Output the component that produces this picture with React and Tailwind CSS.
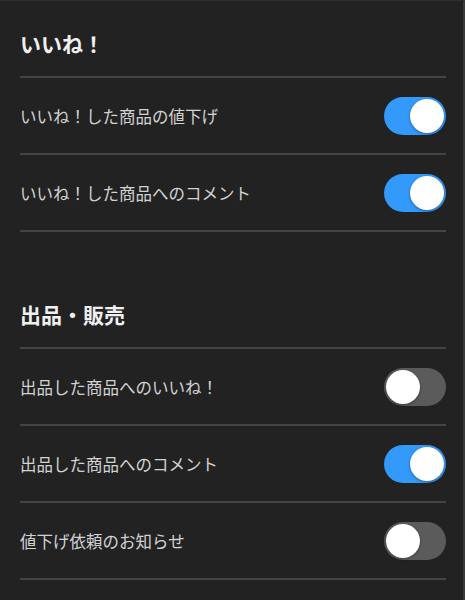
import { useState } from "react";

const sections = [
  {
    title: "いいね！",
    items: [
      { label: "いいね！した商品の値下げ", on: true },
      { label: "いいね！した商品へのコメント", on: true },
    ],
  },
  {
    title: "出品・販売",
    items: [
      { label: "出品した商品へのいいね！", on: false },
      { label: "出品した商品へのコメント", on: true },
      { label: "値下げ依頼のお知らせ", on: false },
    ],
  },
];

function Toggle({ on, onClick }) {
  return (
    <button
      onClick={onClick}
      className={
        on
          ? "flex h-[38px] w-[62px] items-center justify-end rounded-full bg-[#3399fb] px-[2px]"
          : "flex h-[38px] w-[62px] items-center justify-start rounded-full bg-[#5b5b5b] px-[2px]"
      }
    >
      <span className="h-[34px] w-[34px] rounded-full bg-white shadow-[0_1px_3px_rgba(0,0,0,0.35)]"></span>
    </button>
  );
}

export default function App() {
  const [state, setState] = useState(
    sections.map((s) => s.items.map((i) => i.on))
  );

  const flip = (si, ii) => {
    setState((prev) =>
      prev.map((row, a) => row.map((v, b) => (a === si && b === ii ? !v : v)))
    );
  };

  return (
    <div
      className="min-h-[600px] w-full border-t border-r-2 border-t-[#2e2e2e] border-r-[#3a3a3a] bg-[#222222] pl-[20px] pr-[17px]"
      style={{ fontFamily: '"Noto Sans CJK JP", "Noto Sans", sans-serif' }}
    >
      {sections.map((section, si) => (
        <section key={section.title} className={si > 0 ? "mt-[40px]" : ""}>
          {/* Section header */}
          <div className="flex h-[75px] items-start pt-[27px]">
            <h2 className="text-[21px] font-bold leading-[30px] text-[#f0f0f0]">
              {section.title}
            </h2>
          </div>
          <div className="h-[2px] bg-[#444444]"></div>

          {section.items.map((item, ii) => (
            <div key={item.label}>
              <div className="flex h-[75px] items-center justify-between">
                <span className="text-[16.5px] leading-6 text-[#d2d2d2]">
                  {item.label}
                </span>
                <Toggle on={state[si][ii]} onClick={() => flip(si, ii)} />
              </div>
              <div className="h-[2px] bg-[#444444]"></div>
            </div>
          ))}
        </section>
      ))}
    </div>
  );
}
